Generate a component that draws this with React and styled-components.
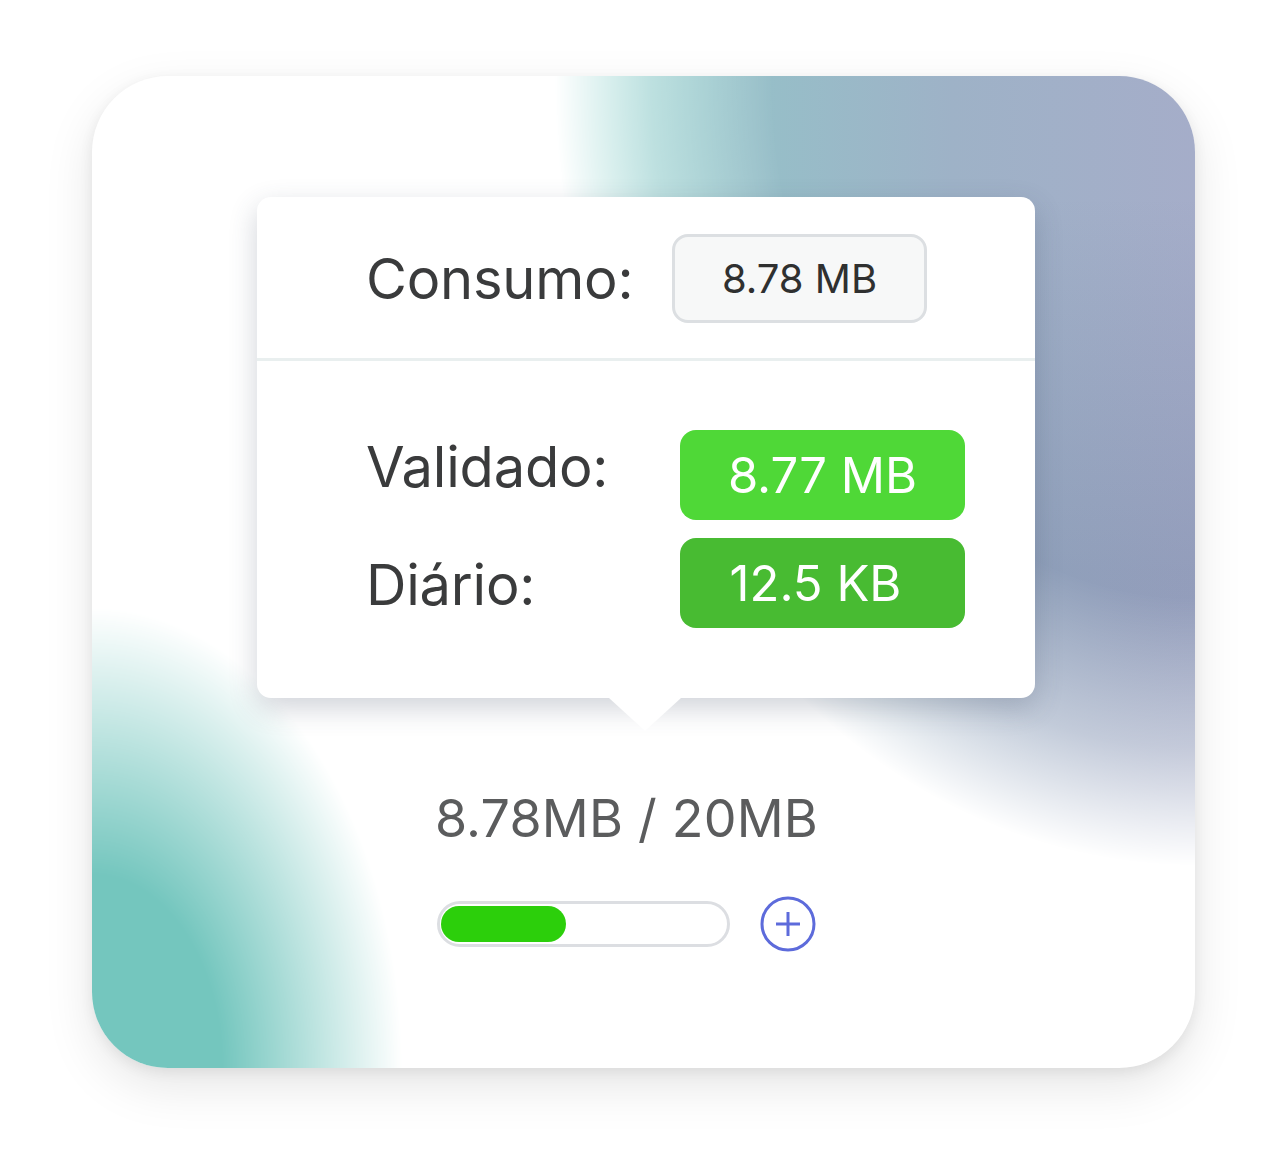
import React from "react";
import styled, { createGlobalStyle } from "styled-components";

const GlobalStyle = createGlobalStyle`
  html, body {
    margin: 0;
    padding: 0;
    background: #ffffff;
  }
  body {
    font-family: Inter, "Noto Sans", "Liberation Sans", sans-serif;
    -webkit-font-smoothing: antialiased;
  }
`;

const Page = styled.div`
  width: 1288px;
  height: 1176px;
  box-sizing: border-box;
  padding: 76px 0 0 92px;
`;

const Card = styled.div`
  position: relative;
  width: 1103px;
  height: 992px;
  border-radius: 76px;
  overflow: hidden;
  background: #ffffff;
  box-shadow: 0 18px 50px rgba(0, 0, 0, 0.1), 0 4px 14px rgba(0, 0, 0, 0.07);
  display: flex;
  flex-direction: column;
  align-items: center;
  padding-top: 121px;
  box-sizing: border-box;

  /* top-right blob */
  &::before {
    content: "";
    position: absolute;
    inset: 0;
    background:
      linear-gradient(180deg, rgba(60, 80, 120, 0) 12%, rgba(60, 80, 120, 0.17) 50%, rgba(60, 80, 120, 0.17) 72%, rgba(60, 80, 120, 0) 90%),
      linear-gradient(90deg, #7fcbc5 46%, #96bfc8 60%, #9eb2c7 78%, #a5adc9 100%);
    -webkit-mask-image: radial-gradient(ellipse 640px 790px at 100% 0%, #000 66%, rgba(0, 0, 0, 0.55) 85%, transparent 100%);
    mask-image: radial-gradient(ellipse 640px 790px at 100% 0%, #000 66%, rgba(0, 0, 0, 0.55) 85%, transparent 100%);
  }

  /* bottom-left blob */
  &::after {
    content: "";
    position: absolute;
    inset: 0;
    background: #74c6be;
    -webkit-mask-image: radial-gradient(ellipse 310px 460px at 0% 100%, #000 42%, transparent 100%);
    mask-image: radial-gradient(ellipse 310px 460px at 0% 100%, #000 42%, transparent 100%);
  }
`;

const Popup = styled.div`
  position: relative;
  z-index: 1;
  width: 778px;
  background: #ffffff;
  border-radius: 14px;
  box-shadow: 0 10px 28px rgba(60, 72, 96, 0.24);
  margin-left: 5px;

  &::after {
    content: "";
    position: absolute;
    left: 352px;
    bottom: -33px;
    border-left: 36px solid transparent;
    border-right: 36px solid transparent;
    border-top: 33px solid #ffffff;
  }
`;

const Header = styled.div`
  display: flex;
  align-items: center;
  padding: 37px 0 35px 109px;
  border-bottom: 3px solid #e9efef;
`;

const Label = styled.span`
  font-size: 56px;
  color: #3a3b3c;
  letter-spacing: -0.2px;
  width: ${(p) => p.$w}px;
  line-height: 1;
  transform: translateY(${(p) => p.$dy || 0}px);
`;

const PlainValue = styled.div`
  width: 255px;
  height: 89px;
  box-sizing: border-box;
  border: 3px solid #dcdfe2;
  border-radius: 16px;
  background: #f7f8f8;
  display: flex;
  align-items: center;
  justify-content: center;
  font-size: 40px;
  color: #2f3030;
`;

const Body = styled.div`
  display: grid;
  grid-template-columns: 314px 285px;
  row-gap: 18px;
  align-items: center;
  padding: 69px 0 70px 109px;
`;

const GreenValue = styled.div`
  height: 90px;
  border-radius: 16px;
  background: ${(p) => p.$bg};
  display: flex;
  align-items: center;
  justify-content: center;
  font-size: 49px;
  color: #ffffff;
  padding-right: ${(p) => p.$pr || 0}px;
`;

const Footer = styled.div`
  position: relative;
  z-index: 1;
  display: flex;
  flex-direction: column;
  align-items: center;
  margin-right: 34px;
  margin-top: 95px;
`;

const Total = styled.div`
  font-size: 52px;
  color: #5b5c5d;
  line-height: 1;
  letter-spacing: 0.2px;
`;

const BarRow = styled.div`
  display: flex;
  align-items: center;
  gap: 30px;
  margin-top: 51px;
`;

const Track = styled.div`
  width: 293px;
  height: 46px;
  box-sizing: border-box;
  border: 3px solid #dcdee2;
  border-radius: 23px;
  background: #ffffff;
  padding: 2px 1px;
  display: flex;
`;

const Fill = styled.div`
  height: 100%;
  border-radius: 20px;
  background: #2ccf0b;
`;

const PlusButton = styled.button`
  width: 56px;
  height: 56px;
  padding: 0;
  border: none;
  background: transparent;
  display: flex;
  align-items: center;
  justify-content: center;
  cursor: pointer;
`;

export default function App() {
  const used = 8.78;
  const total = 20;
  return (
    <>
      <GlobalStyle />
      <Page>
        <Card>
          <Popup>
            <Header>
              <Label $w={306}>Consumo:</Label>
              <PlainValue>8.78 MB</PlainValue>
            </Header>
            <Body>
              <Label $dy={-8}>Validado:</Label>
              <GreenValue $bg="#4fd837">8.77 MB</GreenValue>
              <Label $dy={2}>Diário:</Label>
              <GreenValue $bg="#48bb32" $pr={14}>12.5 KB</GreenValue>
            </Body>
          </Popup>
          <Footer>
            <Total>8.78MB / 20MB</Total>
            <BarRow>
              <Track>
                <Fill style={{ width: `${(used / total) * 100}%` }} />
              </Track>
              <PlusButton aria-label="Adicionar">
                <svg width="56" height="56" viewBox="0 0 56 56" fill="none">
                  <circle cx="28" cy="28" r="26" stroke="#5d6bdb" strokeWidth="3" />
                  <path d="M28 16v24M16 28h24" stroke="#5d6bdb" strokeWidth="3" />
                </svg>
              </PlusButton>
            </BarRow>
          </Footer>
        </Card>
      </Page>
    </>
  );
}
